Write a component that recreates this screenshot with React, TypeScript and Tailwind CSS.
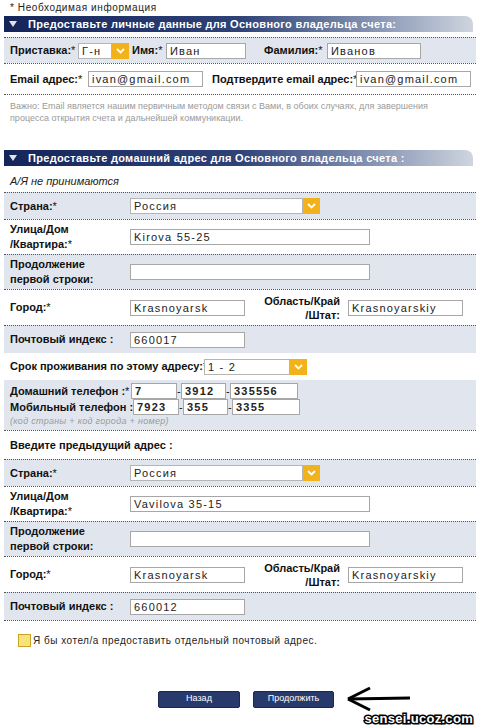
import React from "react";

const font = { fontFamily: '"Liberation Sans", Arial, sans-serif' };

const Input = ({ value = "", w }: { value?: string; w: string }) => (
  <div
    className={`${w} h-[16px] border border-[#a7a7a7] bg-white px-[3px] text-[11px] leading-[14px] tracking-[1.2px] text-[#222] whitespace-nowrap overflow-hidden`}
  >
    {value}
  </div>
);

const Select = ({ value, w }: { value: string; w: string }) => (
  <div className="flex items-center">
    <div
      className={`${w} h-[16px] border border-[#b5b5b5] bg-white px-[3px] text-[11px] leading-[14px] tracking-[1.2px] text-[#222]`}
    >
      {value}
    </div>
    <div className="w-[17px] h-[16px] bg-[#f2b21c] flex items-center justify-center">
      <svg width="9" height="6" viewBox="0 0 9 6">
        <path d="M1 1 L4.5 4.5 L8 1" stroke="white" strokeWidth="1.8" fill="none" />
      </svg>
    </div>
  </div>
);

const Header = ({ title }: { title: string }) => (
  <div className="h-[16px] rounded-tr-[8px] bg-gradient-to-r from-[#15255a] via-[#2f4277] to-[#cfd5df] flex items-center text-white text-[11px] font-bold tracking-[0.3px] whitespace-nowrap">
    <svg width="8" height="6" viewBox="0 0 8 6" className="ml-[5px] mr-[11px]">
      <path d="M0 0 L8 0 L4 6 Z" fill="#dfe4f0" />
    </svg>
    {title}
  </div>
);

const Row = ({
  bg,
  h,
  children,
  top = true,
}: {
  bg?: boolean;
  h: string;
  children: React.ReactNode;
  top?: boolean;
}) => (
  <div
    className={`${h} flex items-center ${bg ? "bg-[#e1e6ee]" : ""} ${
      top ? "border-t border-dotted border-[#555]" : ""
    }`}
  >
    {children}
  </div>
);

const Label = ({ children, w = "w-[120px]" }: { children: React.ReactNode; w?: string }) => (
  <div className={`${w} pl-[6px] text-[11px] leading-[15px] font-bold text-[#111] shrink-0 whitespace-nowrap`}>
    {children}
  </div>
);

const Star = () => <span className="font-normal">*</span>;

const AddressBlock = ({ street, index }: { street: string; index: string }) => (
  <>
    <Row bg h="h-[27px]">
      <Label w="w-[126px]">
        Страна:<Star />
      </Label>
      <Select value="Россия" w="w-[173px]" />
    </Row>
    <Row h="h-[35px]">
      <Label w="w-[126px]">
        Улица/Дом
        <br />
        /Квартира:<Star />
      </Label>
      <Input value={street} w="w-[240px]" />
    </Row>
    <Row bg h="h-[35px]">
      <Label w="w-[126px]">
        Продолжение
        <br />
        первой строки:
      </Label>
      <Input w="w-[240px]" />
    </Row>
    <Row h="h-[36px]">
      <Label w="w-[126px]">
        Город:<Star />
      </Label>
      <Input value="Krasnoyarsk" w="w-[115px]" />
      <div className="w-[95px] text-right text-[11px] leading-[14px] font-bold text-[#111] mr-[8px] whitespace-nowrap">
        Область/Край
        <br />
        /Штат:
      </div>
      <Input value="Krasnoyarskiy" w="w-[115px]" />
    </Row>
    <Row bg h="h-[28px]">
      <Label w="w-[126px]">Почтовый индекс :</Label>
      <Input value={index} w="w-[115px]" />
    </Row>
  </>
);

export default function App() {
  return (
    <div className="w-[480px] h-[726px] bg-white px-[4px] relative overflow-hidden" style={font}>
      <div className="h-[15px] pl-[6px] text-[10px] leading-[13px] tracking-[0.6px] text-[#222] pt-[1px]">
        * Необходимая информация
      </div>
      <div className="mt-[1px] mr-[3px]">
        <Header title="Предоставьте личные данные для Основного владельца счета:" />
      </div>
      <div className="mt-[5px] border-b border-dotted border-[#555]">
        <Row bg h="h-[26px]">
          <Label w="w-[74px]">
            Приставка:<Star />
          </Label>
          <Select value="Г-н" w="w-[34px]" />
          <div className="ml-[3px] w-[34px] text-[11px] font-bold text-[#111] whitespace-nowrap">
            Имя:<Star />
          </div>
          <Input value="Иван" w="w-[80px]" />
          <div className="ml-[18px] w-[63px] text-[11px] font-bold text-[#111] whitespace-nowrap">
            Фамилия:<Star />
          </div>
          <Input value="Иванов" w="w-[94px]" />
        </Row>
        <Row h="h-[31px]">
          <Label w="w-[84px]">
            Email адрес:<Star />
          </Label>
          <Input value="ivan@gmail.com" w="w-[115px]" />
          <div className="ml-[9px] w-[144px] text-[11px] font-bold text-[#111] whitespace-nowrap">
            Подтвердите email адрес:<Star />
          </div>
          <Input value="ivan@gmail.com" w="w-[115px]" />
        </Row>
      </div>
      <div className="pl-[6px] pt-[5px] text-[9px] leading-[12px] text-[#9a9a9a] whitespace-nowrap">
        Важно: Email является нашим первичным методом связи с Вами, в обоих случаях, для завершения
        <br />
        процесса открытия счета и дальнейшей коммуникации.
      </div>

      <div className="mt-[26px] mr-[3px]">
        <Header title="Предоставьте домашний адрес для Основного владельца счета :" />
      </div>
      <div className="h-[26px] pl-[6px] pt-[9px] text-[11px] leading-[13px] italic text-[#222]">
        А/Я не принимаются
      </div>

      <div>
        <AddressBlock street="Kirova 55-25" index="660017" />
        <Row h="h-[27px]" top={false}>
          <Label w="w-[200px]">
            Срок проживания по этому адресу:<Star />
          </Label>
          <Select value="1 - 2" w="w-[86px]" />
        </Row>
        <div className="h-[50px] bg-[#e1e6ee] pt-[3px] pl-[6px] text-[11px] font-bold text-[#111] whitespace-nowrap">
          <div className="flex items-center h-[16px]">
            <div className="w-[121px]">
              Домашний телефон :<Star />
            </div>
            <Input value="7" w="w-[46px]" />
            <span className="w-[4px] font-normal">-</span>
            <Input value="3912" w="w-[45px]" />
            <span className="w-[4px] font-normal">-</span>
            <Input value="335556" w="w-[68px]" />
          </div>
          <div className="flex items-center h-[16px]">
            <div className="w-[123px]">Мобильный телефон :</div>
            <Input value="7923" w="w-[46px]" />
            <span className="w-[4px] font-normal">-</span>
            <Input value="355" w="w-[45px]" />
            <span className="w-[4px] font-normal">-</span>
            <Input value="3355" w="w-[68px]" />
          </div>
          <div className="text-[9px] leading-[12px] font-normal italic tracking-[0.3px] text-[#9a9a9a]">
            (код страны + код города + номер)
          </div>
        </div>
        <Row h="h-[29px]">
          <Label w="w-[300px]">Введите предыдущий адрес :</Label>
        </Row>
        <AddressBlock street="Vavilova 35-15" index="660012" />
        <div className="border-t border-dotted border-[#555]" />
      </div>

      <div className="mt-[12px] ml-[14px] flex items-center text-[10px] tracking-[0.5px] text-[#222]">
        <div className="w-[13px] h-[13px] bg-[#f8e27a] border border-[#c9a227]" />
        <span className="ml-[2px]">
          Я бы хотел/а предоставить отдельный почтовый адрес.
        </span>
      </div>

      <div className="mt-[38px] flex items-center pl-[154px]">
        <button className="w-[82px] h-[17px] bg-[#283a6b] rounded-[2px] text-white text-[9px] border border-[#1a2950]">
          Назад
        </button>
        <button className="ml-[13px] w-[81px] h-[17px] bg-[#283a6b] rounded-[2px] text-white text-[9px] border border-[#1a2950]">
          Продолжить
        </button>
        <svg width="66" height="26" viewBox="0 0 66 26" className="ml-[12px]">
          <path d="M2 13 L64 12" stroke="black" strokeWidth="3" fill="none" />
          <path d="M2 13 L24 2" stroke="black" strokeWidth="3" fill="none" />
          <path d="M2 13 L24 24" stroke="black" strokeWidth="3" fill="none" />
        </svg>
      </div>
      <div className="absolute right-[7px] bottom-[1px] text-[13px] leading-[13px] font-black text-white tracking-[0.3px] [-webkit-text-stroke:3px_black] [paint-order:stroke_fill]">
        sensei.ucoz.com
      </div>
    </div>
  );
}
